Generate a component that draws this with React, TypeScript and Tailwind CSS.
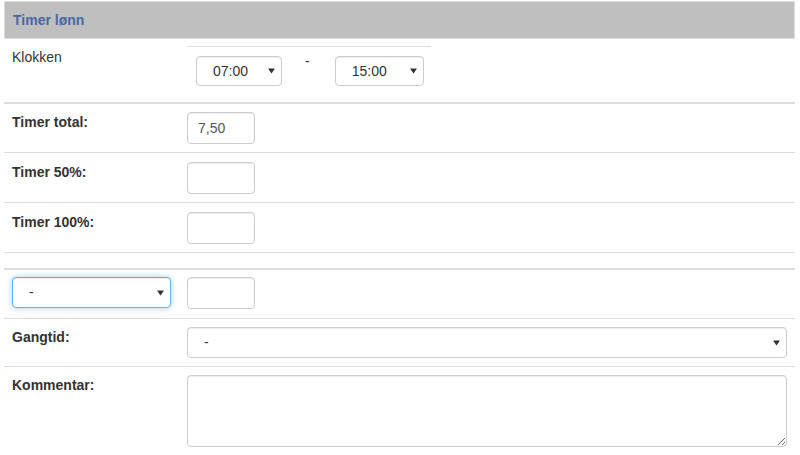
import React from 'react';

/**
 * Timer lønn – skjema for timer og tillegg
 */

function Caret() {
  return (
    <svg
      className="pointer-events-none absolute right-[7px] top-1/2 -translate-y-1/2"
      width="7"
      height="6"
      viewBox="0 0 7 6"
    >
      <path d="M0 0.5 H7 L3.5 5.5 Z" fill="#333" />
    </svg>
  );
}

function Select({
  value,
  className,
  focused = false,
}: {
  value: string;
  className: string;
  focused?: boolean;
}) {
  return (
    <div className={`relative ${className}`}>
      <select
        defaultValue={value}
        className={
          focused
            ? 'h-full w-full appearance-none rounded-[4px] border border-[#66afe9] bg-white pl-[16px] pr-5 text-[14px] text-[#333] shadow-[inset_0_1px_1px_rgba(0,0,0,0.075),0_0_6px_rgba(102,175,233,0.6)] outline-none'
            : 'h-full w-full appearance-none rounded-[4px] border border-[#ccc] bg-white pl-[16px] pr-5 text-[14px] text-[#333] shadow-[inset_0_1px_1px_rgba(0,0,0,0.075)] outline-none'
        }
      >
        <option value={value}>{value}</option>
      </select>
      <Caret />
    </div>
  );
}

function TextInput({ value = '' }: { value?: string }) {
  return (
    <input
      type="text"
      defaultValue={value}
      className="h-[32px] w-[68px] rounded-[4px] border border-[#ccc] bg-white px-[10px] text-[14px] text-[#555] shadow-[inset_0_1px_1px_rgba(0,0,0,0.075)] outline-none"
    />
  );
}

function Row({
  label,
  bold = true,
  thick = false,
  pad = 'pt-[8px] pb-[9px]',
  children,
}: {
  label?: React.ReactNode;
  bold?: boolean;
  thick?: boolean;
  pad?: string;
  children?: React.ReactNode;
}) {
  return (
    <div className={`flex ${thick ? 'border-t-2' : 'border-t'} border-[#ddd] ${pad}`}>
      <div className={`w-[175px] shrink-0 px-2 leading-5 ${bold ? 'font-bold' : ''}`}>{label}</div>
      <div className="min-w-0 flex-1 px-2">{children}</div>
    </div>
  );
}

export default function App() {
  return (
    <div className="h-[455px] w-[800px] overflow-hidden bg-white pl-[4px] pt-[1px] font-['Liberation_Sans',Arial,sans-serif] text-[14px] text-[#333]">
      <div className="w-[791px]">
        {/* Overskrift */}
        <div className="flex h-[38px] items-center border border-[#ddd] bg-[#bfbfbf] px-2 font-bold text-[#4767a9]">
          Timer lønn
        </div>

        {/* Klokken */}
        <div className="flex h-[63px] pt-[7px]">
          <div className="w-[175px] shrink-0 px-2 pt-[1px] leading-5">Klokken</div>
          <div className="flex-1 px-2">
            <div className="w-[244px] border-t border-[#ddd]">
              <div className="flex items-start">
                <Select value="07:00" className="ml-[9px] mt-[9px] h-[30px] w-[86px]" />
                <span className="ml-[23px] mt-[4px] leading-5">-</span>
                <Select value="15:00" className="ml-[25px] mt-[9px] h-[30px] w-[89px]" />
              </div>
            </div>
          </div>
        </div>

        <Row label="Timer total:" thick pad="pt-[8px] pb-[8px]">
          <TextInput value="7,50" />
        </Row>
        <Row label="Timer 50%:" pad="pt-[9px] pb-[8px]">
          <TextInput />
        </Row>
        <Row label="Timer 100%:" pad="pt-[9px] pb-[8px]">
          <TextInput />
        </Row>

        {/* Tom rad */}
        <div className="h-[16px] border-t border-[#ddd]" />

        {/* Tillegg */}
        <div className="flex border-t-2 border-[#ddd] pb-[9px] pt-[7px]">
          <div className="w-[175px] shrink-0 px-2">
            <Select value="-" focused className="h-[31px] w-full" />
          </div>
          <div className="flex-1 px-2">
            <TextInput />
          </div>
        </div>

        <Row label="Gangtid:" pad="pt-[8px] pb-[8px]">
          <Select value="-" className="h-[31px] w-full" />
        </Row>

        <Row label="Kommentar:" pad="pt-[8px] pb-[8px]">
          <textarea className="block h-[72px] w-full rounded-[4px] border border-[#ccc] bg-white px-3 py-1.5 text-[14px] text-[#555] shadow-[inset_0_1px_1px_rgba(0,0,0,0.075)] outline-none" />
        </Row>
      </div>
    </div>
  );
}
